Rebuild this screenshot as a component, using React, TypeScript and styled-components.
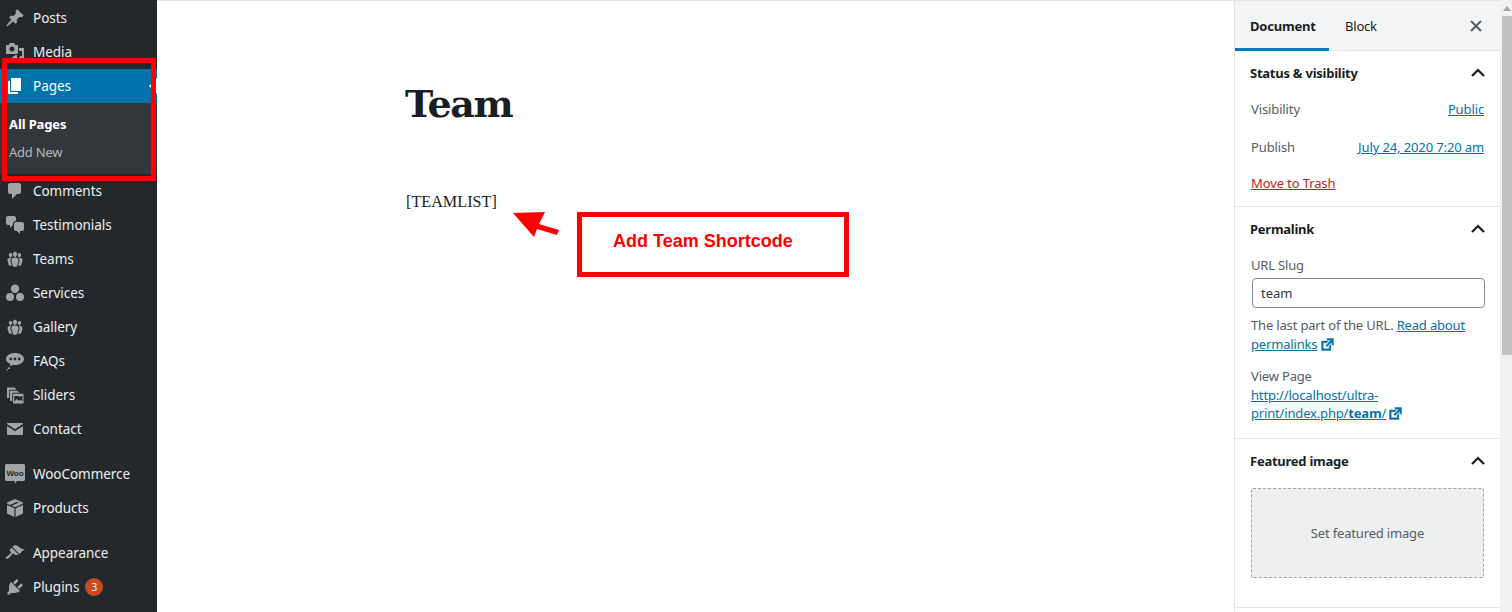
import React from "react";
import styled, { createGlobalStyle } from "styled-components";

const Global = createGlobalStyle`
  html, body { margin: 0; padding: 0; height: 612px; overflow: hidden; background: #fff; }
  * { box-sizing: border-box; }
`;

const UI = `"Noto Sans", "Open Sans", sans-serif`;

const Page = styled.div`
  position: relative;
  display: flex;
  width: 1512px;
  height: 612px;
  overflow: hidden;
  font-family: ${UI};
`;

const AdminMenu = styled.nav`
  flex: 0 0 157px;
  height: 612px;
  padding-top: 1px;
  background: #23282d;
  overflow: hidden;
`;

const MenuRow = styled.div<{ $active?: boolean; $gap?: boolean }>`
  position: relative;
  display: flex;
  align-items: center;
  height: 34px;
  margin-top: ${(p) => (p.$gap ? "11px" : "0")};
  background: ${(p) => (p.$active ? "#0073aa" : "transparent")};
  color: ${(p) => (p.$active ? "#fff" : "#eeeeee")};
  font-size: 13.5px;
  letter-spacing: -0.04px;
`;

const MenuIcon = styled.svg<{ $active?: boolean }>`
  flex: 0 0 20px;
  width: 20px;
  height: 20px;
  margin: 0 8px 0 5px;
  fill: ${(p) => (p.$active ? "#fff" : "#a0a5aa")};
`;

const ActiveCaret = styled.span`
  position: absolute;
  right: 0;
  top: 9px;
  width: 0;
  height: 0;
  border-style: solid;
  border-color: transparent #fff transparent transparent;
  border-width: 8px 8px 8px 0;
`;

const SubMenu = styled.div`
  padding: 7px 0 8px;
  background: #32373c;
`;

const SubItem = styled.div<{ $current?: boolean }>`
  height: 28px;
  padding-left: 9px;
  line-height: 28px;
  font-size: 13px;
  letter-spacing: ${(p) => (p.$current ? "-0.12px" : "-0.25px")};
  font-weight: ${(p) => (p.$current ? 700 : 400)};
  color: ${(p) => (p.$current ? "#fff" : "#b4b9be")};
`;

const Badge = styled.span`
  display: inline-flex;
  align-items: center;
  justify-content: center;
  width: 18px;
  height: 18px;
  margin-left: 6px;
  border-radius: 50%;
  background: #ca4a1f;
  color: #fff;
  font-size: 10px;
`;

const Editor = styled.main`
  flex: 1;
  height: 612px;
  padding: 77px 0 0 248px;
  border-top: 1px solid #e2e4e7;
  background: #fff;
`;

const PostTitle = styled.h1`
  margin: 0;
  height: 52px;
  font-family: "DejaVu Serif", "Liberation Serif", serif;
  font-size: 38px;
  line-height: 52px;
  font-weight: 700;
  letter-spacing: -1.4px;
  color: #191e23;
`;

const Paragraph = styled.p`
  margin: 62px 0 0 1px;
  font-family: "Liberation Serif", serif;
  font-size: 16.2px;
  line-height: 20px;
  color: #191e23;
`;

const HighlightBox = styled.div`
  position: absolute;
  left: 2px;
  top: 58px;
  width: 154px;
  height: 123px;
  border: 5px solid #ff0000;
  pointer-events: none;
`;

const CalloutBox = styled.div`
  position: absolute;
  left: 577px;
  top: 212px;
  width: 272px;
  height: 65px;
  padding: 14px 0 0 31px;
  border: 5px solid #ff0000;
  font-family: "Liberation Sans", Arial, sans-serif;
  font-size: 18px;
  line-height: 20px;
  font-weight: 700;
  color: #ff0000;
`;

const CalloutArrow = styled.svg`
  position: absolute;
  left: 510px;
  top: 208px;
  width: 52px;
  height: 32px;
  fill: #ff0000;
`;

const Inspector = styled.aside`
  flex: 0 0 266px;
  min-width: 0;
  height: 612px;
  border-top: 1px solid #e2e4e7;
  border-left: 1px solid #e2e4e7;
  background: #fff;
`;

const Tabs = styled.div`
  display: flex;
  align-items: stretch;
  height: 50px;
  border-bottom: 1px solid #e2e4e7;
  background: #f3f4f5;
`;

const Tab = styled.div<{ $active?: boolean }>`
  display: flex;
  align-items: center;
  width: ${(p) => (p.$active ? "94px" : "auto")};
  padding: 2px 0 0 ${(p) => (p.$active ? "15px" : "16px")};
  margin-bottom: -1px;
  border-bottom: 3px solid ${(p) => (p.$active ? "#007cba" : "transparent")};
  font-size: 13px;
  letter-spacing: -0.2px;
  font-weight: ${(p) => (p.$active ? 700 : 400)};
  color: #191e23;
`;

const CloseButton = styled.svg`
  width: 24px;
  height: 24px;
  margin: 13px 12px 0 auto;
  fill: none;
  stroke: #555d66;
  stroke-width: 2;
`;

const Panel = styled.section<{ $height: number }>`
  height: ${(p) => p.$height}px;
  padding: 0 16px 0 15px;
  border-bottom: 1px solid #e2e4e7;
`;

const PanelHeader = styled.header`
  display: flex;
  align-items: center;
  justify-content: space-between;
  height: 44px;
  font-size: 13px;
  letter-spacing: -0.25px;
  font-weight: 700;
  color: #191e23;
`;

const Chevron = styled.svg`
  width: 24px;
  height: 24px;
  margin-right: -6px;
  fill: none;
  stroke: #191e23;
  stroke-width: 2.2;
`;

const InfoRow = styled.div<{ $top: number }>`
  display: flex;
  justify-content: space-between;
  height: 20px;
  margin-top: ${(p) => p.$top}px;
  padding-left: 1px;
  font-size: 13px;
  line-height: 20px;
  letter-spacing: -0.12px;
  color: #555d66;
`;

const Link = styled.a<{ $danger?: boolean }>`
  color: ${(p) => (p.$danger ? "#b52727" : "#0073aa")};
  text-decoration: underline;
  b { font-weight: 700; }
`;

const ExternalIcon = styled.svg`
  width: 17px;
  height: 17px;
  margin-left: -2px;
  fill: #0073aa;
  stroke: #0073aa;
  stroke-width: 0.5;
  vertical-align: -4px;
`;

const FieldLabel = styled.div`
  height: 20px;
  margin: 4px 0 3px 1px;
  font-size: 13px;
  line-height: 20px;
  letter-spacing: -0.17px;
  color: #555d66;
`;

const SlugInput = styled.div`
  width: 233px;
  height: 30px;
  margin-left: 2px;
  padding-left: 8px;
  border: 1px solid #7e8993;
  border-radius: 4px;
  font-size: 13px;
  line-height: 28px;
  color: #32373c;
`;

const HelpBlock = styled.div<{ $top: number }>`
  margin: ${(p) => p.$top}px 0 0 1px;
`;

const HelpLine = styled.div<{ $line: number }>`
  font-size: 13px;
  line-height: ${(p) => p.$line}px;
  height: ${(p) => p.$line}px;
  letter-spacing: -0.17px;
  white-space: nowrap;
  color: #555d66;
`;

const FeaturedButton = styled.div`
  display: flex;
  align-items: center;
  justify-content: center;
  width: 233px;
  height: 90px;
  margin: 5px 0 0 1px;
  border: 1px dashed #a2a6aa;
  border-radius: 2px;
  background: #edeff0;
  font-size: 13px;
  letter-spacing: -0.17px;
  color: #555d66;
`;

const Scrollbar = styled.div`
  position: relative;
  flex: 0 0 12px;
  height: 612px;
  background: #f1f1f1;
`;

const ScrollArrow = styled.span`
  position: absolute;
  left: 3px;
  top: 6px;
  width: 0;
  height: 0;
  border-left: 4px solid transparent;
  border-right: 4px solid transparent;
  border-bottom: 5px solid #a3a3a3;
`;

const ScrollThumb = styled.div`
  position: absolute;
  left: 2px;
  right: 0;
  top: 16px;
  height: 339px;
  background: #c1c1c1;
`;

const paths = {
  post: "M10.44 3.02l1.82-1.82 6.36 6.35-1.83 1.82c-1.05-.68-2.48-.57-3.41.36l-.75.75c-.92.93-1.04 2.35-.35 3.41l-1.83 1.82-2.41-2.41-2.8 2.79c-.42.42-3.38 2.71-3.8 2.29s1.86-3.39 2.28-3.81l2.79-2.79L4.1 9.36l1.83-1.82c1.05.69 2.48.57 3.4-.36l.75-.75c.93-.92 1.05-2.35.36-3.41z",
  media: "M13 11V4c0-.55-.45-1-1-1h-1.67L9 1H5L3.67 3H2c-.55 0-1 .45-1 1v7c0 .55.45 1 1 1h10c.55 0 1-.45 1-1zM7 4.5c1.38 0 2.5 1.12 2.5 2.5S8.38 9.5 7 9.5 4.5 8.38 4.5 7 5.62 4.5 7 4.5zM14 6h5v10.5c0 1.38-1.12 2.5-2.5 2.5S14 17.88 14 16.5s1.12-2.5 2.5-2.5c.17 0 .34.02.5.05V9h-3V6zm-4 8.05V13h2v3.5c0 1.38-1.12 2.5-2.5 2.5S7 17.88 7 16.5 8.12 14 9.5 14c.17 0 .34.02.5.05z",
  page: "M6 15V2h10v13H6zm-1 1h8v2H3V5h2v11z",
  comments: "M5 2h9c1.1 0 2 .9 2 2v7c0 1.1-.9 2-2 2h-2l-5 5v-5H5c-1.1 0-2-.9-2-2V4c0-1.1.9-2 2-2z",
  chat: "M11 6h-.82C9.07 6 8 7.2 8 8.16V10l-3 3v-3H3c-1.1 0-2-.9-2-2V3c0-1.1.9-2 2-2h6c1.1 0 2 .9 2 2v3zm0 1h6c1.1 0 2 .9 2 2v5c0 1.1-.9 2-2 2h-2v3l-3-3h-1c-1.1 0-2-.9-2-2V9c0-1.1.9-2 2-2z",
  groups: "M8.03 4.46c-.29 1.28.55 3.46 1.97 3.46 1.41 0 2.25-2.18 1.96-3.46-.22-.98-1.08-1.63-1.96-1.63-.89 0-1.74.65-1.97 1.63zm-4.13.9c-.25 1.08.47 2.93 1.67 2.93s1.92-1.85 1.67-2.93c-.19-.83-.92-1.39-1.67-1.39s-1.48.56-1.67 1.39zm8.86 0c-.25 1.08.47 2.93 1.66 2.93 1.2 0 1.92-1.85 1.67-2.93-.19-.83-.92-1.39-1.67-1.39-.74 0-1.47.56-1.66 1.39zm-.59 11.43l1.25-4.3C14.2 10 12.71 8.47 10 8.47c-2.72 0-4.21 1.53-3.44 4.02l1.26 4.3C8.05 17.51 9 18 10 18c.98 0 1.94-.49 2.17-1.21zm-6.1-7.63c-.49.67-.96 1.83-.42 3.59l1.12 3.79c-.34.2-.77.31-1.2.31-.85 0-1.65-.41-1.85-1.03l-1.07-3.65c-.65-2.11.61-3.4 2.92-3.4.27 0 .54.02.79.06-.1.1-.2.22-.29.33zm8.35-.39c2.31 0 3.58 1.29 2.92 3.4l-1.07 3.65c-.2.62-1 1.03-1.85 1.03-.43 0-.86-.11-1.2-.31l1.11-3.77c.55-1.78.08-2.94-.42-3.61-.08-.11-.18-.23-.28-.33.25-.04.51-.06.79-.06z",
  services: "M10 1.5a4.2 4.2 0 1 1 0 8.4 4.2 4.2 0 0 1 0-8.4zM5 10a4 4 0 1 1 0 8 4 4 0 0 1 0-8zm10 0a4 4 0 1 1 0 8 4 4 0 0 1 0-8z",
  faq: "M10 2c4.97 0 9 2.69 9 6s-4.03 6-9 6c-.9 0-1.77-.09-2.6-.26L5 15.5l.3-2.6C2.7 11.8 1 10 1 8c0-3.31 4.03-6 9-6zM5.8 6.6a1.4 1.4 0 1 0 0 2.8 1.4 1.4 0 0 0 0-2.8zm4.2 0a1.4 1.4 0 1 0 0 2.8 1.4 1.4 0 0 0 0-2.8zm4.2 0a1.4 1.4 0 1 0 0 2.8 1.4 1.4 0 0 0 0-2.8zM3 16.5h2V18H3v-1.5zm-1.6 1.8h1.3v1.2H1.4v-1.2z",
  sliders: "M2 2.5h7.5l1.5 1.5v.8H4.2V13H2V2.5zM5 5.8h7.5l1.5 1.6v.4H7.2V16H5V5.8zM8 8.8h10.5V18.5H8V8.8zm1.2 7.6 2.6-2.4 2 1.7 1.6-1 2 1.6v-5.2h-1.1a1.8 1.8 0 0 1-3 0H9.2v5.3z",
  mail: "M2 4.5c0-.3.2-.5.5-.5h15c.3 0 .5.2.5.5v.4l-8 5.3-8-5.3v-.4zM2 7l8 5.3L18 7v8.5c0 .3-.2.5-.5.5h-15c-.3 0-.5-.2-.5-.5V7z",
  products: "M10 1l8 3.4v1.2L10 9.2 6.6 7.7l7.2-3.1-1.8-.8L4.8 6.9 2 5.6V4.4L10 1zM2 7l7.4 3.3V19L2 15.6V7zm16 0v8.6L10.6 19v-8.7L18 7z",
  appearance: "M14.48 11.06L7.41 3.99l1.5-1.5c.5-.56 2.3-.47 3.51.32 1.21.8 1.43 1.28 2.91 2.1 1.18.64 2.45 1.26 4.45.85zm-.71.71L6.7 4.7 4.93 6.47c-.39.39-.39 1.02 0 1.41l1.06 1.06c.39.39.39 1.03 0 1.42-.6.6-1.43 1.11-2.21 1.69-.35.26-.7.53-1.01.84C1.43 13.23.4 14.98 1.1 15.68c.7.7 2.45-.33 3.8-1.68.31-.31.58-.66.85-1.02.57-.78 1.08-1.61 1.69-2.21.39-.39 1.02-.39 1.41 0l1.06 1.06c.39.39 1.02.39 1.41 0z",
  plugins: "M13.11 4.36L9.87 7.6 8 5.73l3.24-3.24c.35-.34 1.05-.2 1.56.32.52.51.66 1.21.31 1.55zm-8 1.77l.91-1.12 9.01 9.01-1.19.84c-.71.71-2.63 1.16-3.82 1.16H6.14L4.9 17.26c-.59.59-1.54.59-2.12 0-.59-.58-.59-1.53 0-2.12l1.24-1.24v-3.88c0-1.13.4-3.19 1.09-3.89zm7.26 3.97l3.24-3.24c.34-.35 1.04-.21 1.55.31.52.51.66 1.21.31 1.55l-3.24 3.25z",
};

const WooIcon = () => (
  <MenuIcon viewBox="0 0 20 20">
    <path d="M1.5 0h17c.8 0 1.5.7 1.5 1.5v14c0 .8-.7 1.5-1.5 1.5H12l-1.8 2.5L9.5 17h-8C.7 17 0 16.3 0 15.5v-14C0 .7.7 0 1.5 0z" />
    <text x="10" y="11.5" textAnchor="middle" fontSize="8" fontWeight="700" fontFamily="Liberation Sans" fill="#23282d">Woo</text>
  </MenuIcon>
);

const External = () => (
  <ExternalIcon viewBox="0 0 20 20">
    <path d="M9 3h8v8l-2-1V6.92l-5.6 5.59-1.41-1.41L14.08 5H10zm3 12v-3l2-2v7H3V6h8L9 8H5v7h7z" />
  </ExternalIcon>
);

const Up = () => (
  <Chevron viewBox="0 0 24 24">
    <path d="M6 15l6-6 6 6" />
  </Chevron>
);

type Item = { label: string; icon: keyof typeof paths; gap?: boolean };
const beforePages: Item[] = [
  { label: "Posts", icon: "post" },
  { label: "Media", icon: "media" },
];
const afterPages: Item[] = [
  { label: "Comments", icon: "comments" },
  { label: "Testimonials", icon: "chat" },
  { label: "Teams", icon: "groups" },
  { label: "Services", icon: "services" },
  { label: "Gallery", icon: "groups" },
  { label: "FAQs", icon: "faq" },
  { label: "Sliders", icon: "sliders" },
  { label: "Contact", icon: "mail" },
];

const Row = ({ label, icon, gap }: Item) => (
  <MenuRow $gap={gap}>
    <MenuIcon viewBox="0 0 20 20"><path d={paths[icon]} /></MenuIcon>
    {label}
  </MenuRow>
);

export default function App() {
  return (
    <Page>
      <Global />
      <AdminMenu>
        {beforePages.map((i) => <Row key={i.label} {...i} />)}
        <MenuRow $active>
          <MenuIcon $active viewBox="0 0 20 20"><path d={paths.page} /></MenuIcon>
          Pages
          <ActiveCaret />
        </MenuRow>
        <SubMenu>
          <SubItem $current>All Pages</SubItem>
          <SubItem>Add New</SubItem>
        </SubMenu>
        {afterPages.map((i) => <Row key={i.label} {...i} />)}
        <MenuRow $gap><WooIcon />WooCommerce</MenuRow>
        <Row label="Products" icon="products" />
        <Row label="Appearance" icon="appearance" gap />
        <MenuRow>
          <MenuIcon viewBox="0 0 20 20"><path d={paths.plugins} /></MenuIcon>
          Plugins<Badge>3</Badge>
        </MenuRow>
      </AdminMenu>

      <Editor>
        <PostTitle>Team</PostTitle>
        <Paragraph>[TEAMLIST]</Paragraph>
      </Editor>

      <Inspector>
        <Tabs>
          <Tab $active>Document</Tab>
          <Tab>Block</Tab>
          <CloseButton viewBox="0 0 24 24">
            <path d="M7 7l10 10M17 7L7 17" />
          </CloseButton>
        </Tabs>
        <Panel $height={156}>
          <PanelHeader>Status &amp; visibility<Up /></PanelHeader>
          <InfoRow $top={4}><span>Visibility</span><Link>Public</Link></InfoRow>
          <InfoRow $top={18}><span>Publish</span><Link>July 24, 2020 7:20 am</Link></InfoRow>
          <InfoRow $top={16}><Link $danger>Move to Trash</Link></InfoRow>
        </Panel>
        <Panel $height={232}>
          <PanelHeader>Permalink<Up /></PanelHeader>
          <FieldLabel>URL Slug</FieldLabel>
          <SlugInput>team</SlugInput>
          <HelpBlock $top={8}>
            <HelpLine $line={19}>The last part of the URL. <Link>Read about</Link></HelpLine>
            <HelpLine $line={19}><Link>permalinks</Link> <External /></HelpLine>
          </HelpBlock>
          <HelpBlock $top={13}>
            <HelpLine $line={19}>View Page</HelpLine>
            <HelpLine $line={18}><Link>http://localhost/ultra-</Link></HelpLine>
            <HelpLine $line={18}><Link>print/index.php/<b>team</b>/</Link> <External /></HelpLine>
          </HelpBlock>
        </Panel>
        <Panel $height={169}>
          <PanelHeader>Featured image<Up /></PanelHeader>
          <FeaturedButton>Set featured image</FeaturedButton>
        </Panel>
      </Inspector>

      <Scrollbar>
        <ScrollArrow />
        <ScrollThumb />
      </Scrollbar>

      <HighlightBox />
      <CalloutArrow viewBox="510 208 52 32">
        <path d="M513 213 545 212 539 224 559 230 557 235 537 229 534 237z" />
      </CalloutArrow>
      <CalloutBox>Add Team Shortcode</CalloutBox>
    </Page>
  );
}
